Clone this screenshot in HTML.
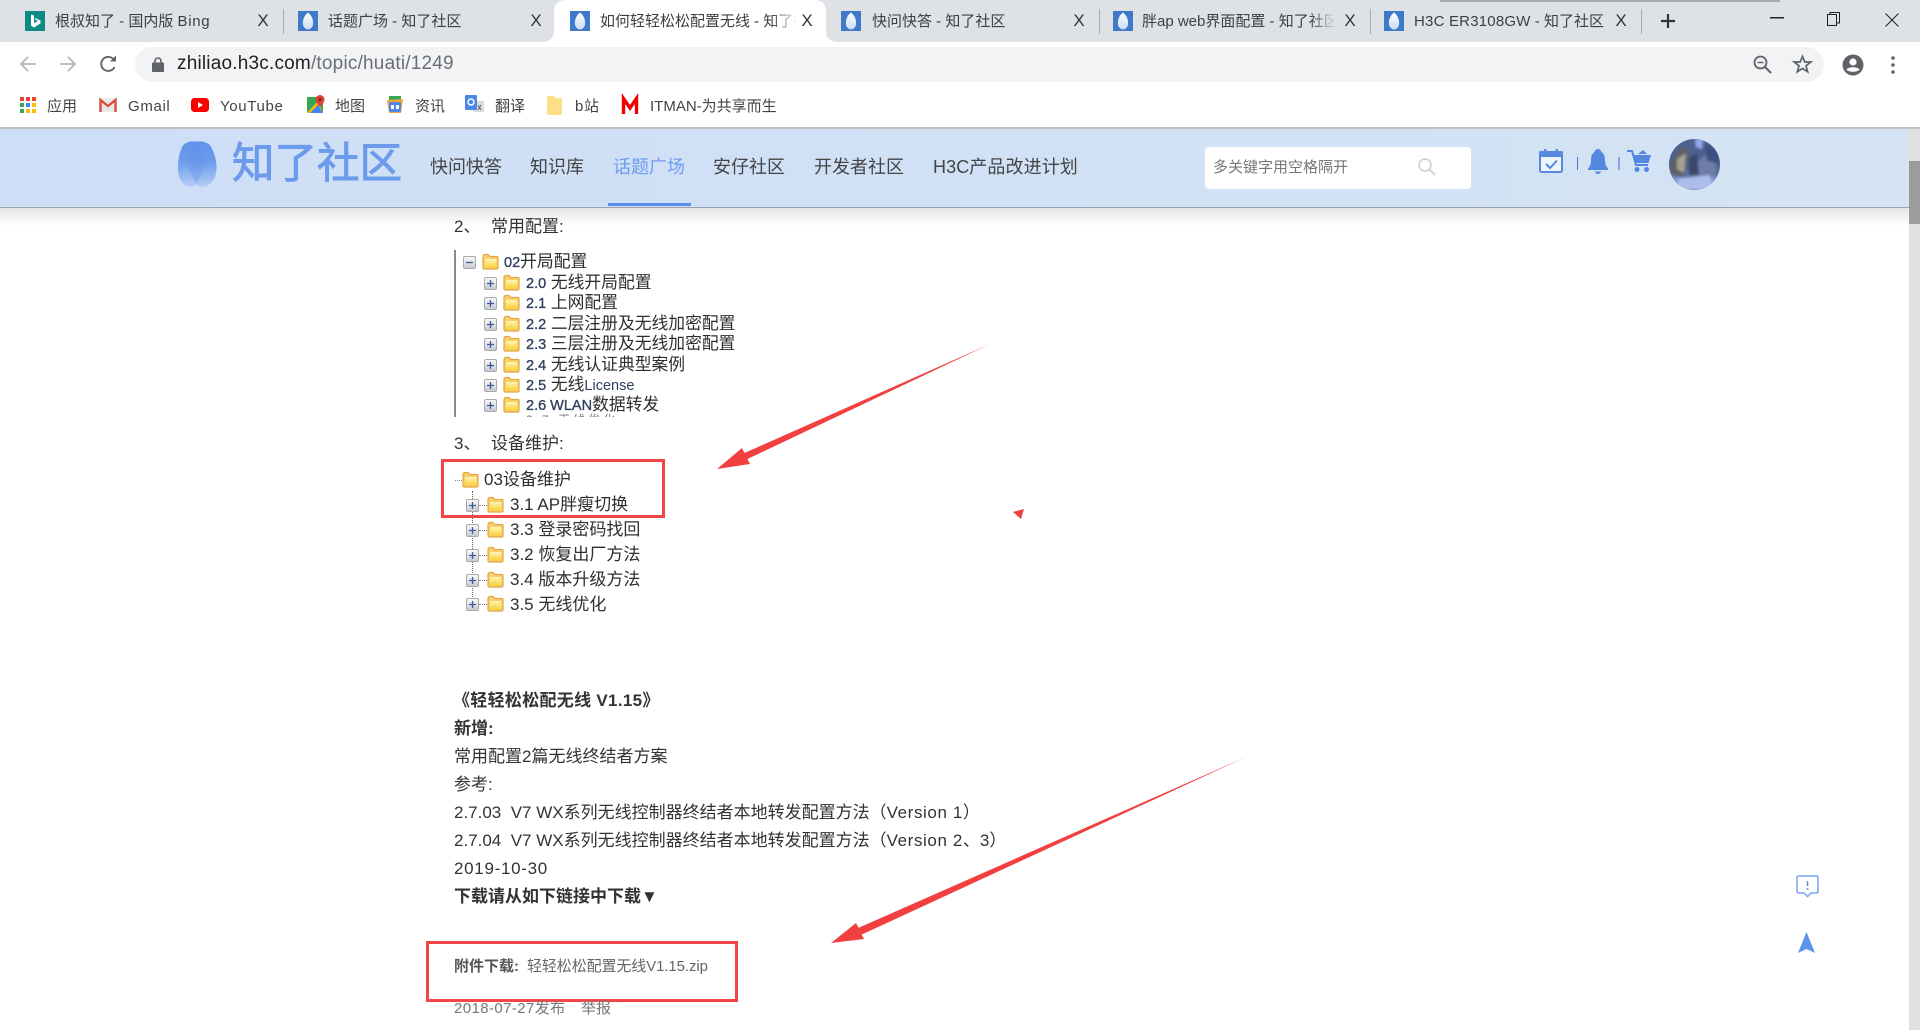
<!DOCTYPE html>
<html lang="zh">
<head>
<meta charset="utf-8">
<title>知了社区</title>
<style>
html,body{margin:0;padding:0;width:1920px;height:1030px;overflow:hidden;background:#fff}
body{position:relative;font-family:"Liberation Sans","Noto Sans CJK SC",sans-serif;color:#333}
.a{position:absolute}
.t{position:absolute;white-space:nowrap;line-height:24px;height:24px;margin-top:1px}
.tab{font-size:15px;color:#3c4043}
.x{position:absolute;font-size:17px;line-height:20px;color:#333;top:11px;width:14px;text-align:center;font-weight:400}
.sep{position:absolute;width:1px;top:9px;height:25px;background:#a9adb2}
.bm{font-size:15px;color:#444}
.bm i{font-style:normal;letter-spacing:.65px}
.nav{font-size:18px;color:#444}
.c{font-size:17px;color:#333}
.tree{font-size:16.8px;color:#2e2e2e;margin-top:0}
.tree b{font-weight:400;font-size:14.5px;color:#30405f;-webkit-text-stroke:.35px #30405f}
.tree2{font-size:17px;color:#2e2e2e}
svg{position:absolute;overflow:visible}
.fade{position:absolute;top:6px;height:30px;width:26px}
</style>
</head>
<body>
<svg width="0" height="0" style="position:absolute">
<defs>
<linearGradient id="fav" x1="0" y1="0" x2="0" y2="1"><stop offset="0" stop-color="#fff"/><stop offset="1" stop-color="#c9dcf4"/></linearGradient>
<linearGradient id="fl" x1="0" y1="0" x2="0" y2="1"><stop offset="0" stop-color="#fff6b4"/><stop offset="1" stop-color="#fbcf38"/></linearGradient>
<linearGradient id="ex" x1="0" y1="0" x2="0" y2="1"><stop offset="0" stop-color="#fbfbfc"/><stop offset="1" stop-color="#c4c8d0"/></linearGradient>
<linearGradient id="logoG" x1="0" y1="0" x2="0" y2="1"><stop offset="0" stop-color="#5f92ea"/><stop offset=".45" stop-color="#6d9cec"/><stop offset="1" stop-color="#6d9cec" stop-opacity=".25"/></linearGradient>
<symbol id="favi" viewBox="0 0 20 20"><rect width="20" height="20" fill="#3f79c9"/><path d="M10 1.500C5.500 5 4.500 10 5 13.500 5.500 17 8.500 18.500 10 18.500s4.500-1.500 5-5C15.500 10 14.500 5 10 1.500Z" fill="url(#fav)"/></symbol>
<symbol id="folder" viewBox="0 0 17 17"><path d="M1 4Q1 1.500 3 1.500H6L8 3.500H15Q16 3.500 16 5V14.500Q16 16 14.500 16H2.500Q1 16 1 14.500Z" fill="#f8cf6a" stroke="#e2a544" stroke-width="1.200"/><rect x="3" y="6" width="11.500" height="8.500" rx="1" fill="url(#fl)"/></symbol>
<symbol id="plus" viewBox="0 0 13 13"><rect x=".5" y=".5" width="12" height="12" rx="1.500" fill="url(#ex)" stroke="#aaa"/><path d="M6.500 3V10M3 6.500H10" stroke="#3a5a9a" stroke-width="1.300"/></symbol>
<symbol id="minus" viewBox="0 0 13 13"><rect x=".5" y=".5" width="12" height="12" rx="1.500" fill="url(#ex)" stroke="#aaa"/><path d="M3 6.500H10" stroke="#3a5a9a" stroke-width="1.300"/></symbol>
</defs>
</svg>

<!-- Tab strip -->
<div class="a" style="left:0;top:0;width:1920px;height:42px;background:#dee1e6"></div>
<div class="a" style="left:1440px;top:0;width:340px;height:2px;background:#a9adb3"></div>
<svg style="left:542px;top:0" width="296" height="42"><path d="M0 42Q12 42 12 30V12Q12 0 24 0H272Q284 0 284 12V30Q284 42 296 42Z" fill="#fff"/></svg>
<div class="sep" style="left:283px"></div><div class="sep" style="left:1099px"></div><div class="sep" style="left:1370px"></div><div class="sep" style="left:1641px"></div>

<svg style="left:25px;top:11px" width="20" height="20" viewBox="0 0 20 20"><rect width="20" height="20" fill="#0d8a82"/><path d="M6 3.500L9 4.500V12L13 10 10.500 8.800 10 7 15.500 9.500V12.500L9 16.500 6 14.800Z" fill="#fff"/></svg>
<div class="t tab" style="left:55px;top:9px">根叔知了 - 国内版 <span style="letter-spacing:.7px">Bing</span></div>
<div class="x" style="left:256px">X</div>

<svg style="left:298px;top:11px" width="20" height="20"><use href="#favi"/></svg>
<div class="t tab" style="left:328px;top:9px">话题广场 - 知了社区</div>
<div class="x" style="left:529px">X</div>

<svg style="left:570px;top:11px" width="20" height="20"><use href="#favi"/></svg>
<div class="t tab" style="left:600px;top:9px;width:196px;overflow:hidden">如何轻轻松松配置无线 - 知了社区</div>
<div class="fade" style="left:772px;background:linear-gradient(90deg,rgba(255,255,255,0),#fff)"></div>
<div class="x" style="left:800px">X</div>

<svg style="left:841px;top:11px" width="20" height="20"><use href="#favi"/></svg>
<div class="t tab" style="left:872px;top:9px">快问快答 - 知了社区</div>
<div class="x" style="left:1072px">X</div>

<svg style="left:1113px;top:11px" width="20" height="20"><use href="#favi"/></svg>
<div class="t tab" style="left:1142px;top:9px;width:192px;overflow:hidden">胖ap web界面配置 - 知了社区</div>
<div class="fade" style="left:1310px;background:linear-gradient(90deg,rgba(222,225,230,0),#dee1e6)"></div>
<div class="x" style="left:1343px">X</div>

<svg style="left:1384px;top:11px" width="20" height="20"><use href="#favi"/></svg>
<div class="t tab" style="left:1414px;top:9px"><span style="letter-spacing:.2px">H3C ER3108GW</span> - 知了社区</div>
<div class="x" style="left:1614px">X</div>

<svg style="left:1660px;top:13px" width="16" height="16"><path d="M8 1V15M1 8H15" stroke="#333" stroke-width="2.200"/></svg>
<!-- window controls -->
<svg style="left:1770px;top:17px" width="14" height="2"><rect width="14" height="1.500" fill="#222"/></svg>
<svg style="left:1827px;top:12px" width="14" height="14"><rect x=".5" y="2.500" width="9" height="11" fill="none" stroke="#222"/><path d="M3 2.500V.5H12.500V11H9.500" fill="none" stroke="#222"/></svg>
<svg style="left:1885px;top:13px" width="14" height="14"><path d="M.5.5L13.500 13.500M13.500.5L.5 13.500" stroke="#222" stroke-width="1"/></svg>

<!-- Toolbar -->
<div class="a" style="left:135px;top:47px;width:1689px;height:35px;border-radius:18px;background:#f1f3f4"></div>
<svg style="left:19px;top:55px" width="18" height="18" viewBox="0 0 18 18"><path d="M17 9H2M9 2L2 9L9 16" fill="none" stroke="#b4b7bb" stroke-width="1.800"/></svg>
<svg style="left:59px;top:55px" width="18" height="18" viewBox="0 0 18 18"><path d="M1 9H16M9 2L16 9L9 16" fill="none" stroke="#b4b7bb" stroke-width="1.800"/></svg>
<svg style="left:99px;top:55px" width="19" height="18" viewBox="0 0 19 18"><path d="M15.500 12A7 7 0 1 1 15 5" fill="none" stroke="#5f6368" stroke-width="1.900"/><path d="M11 6.500H17V.5Z" fill="#5f6368"/></svg>
<svg style="left:152px;top:57px" width="12" height="15" viewBox="0 0 12 15"><rect y="5.500" width="12" height="9.500" rx="1" fill="#5f6368"/><path d="M3 6V4A3 3 0 0 1 9 4V6" fill="none" stroke="#5f6368" stroke-width="1.600"/></svg>
<div class="t" style="left:177px;top:51px;font-size:19px;letter-spacing:.2px;color:#202124">zhiliao.h3c.com<span style="color:#6b6f74">/topic/huati/1249</span></div>
<svg style="left:1753px;top:55px" width="19" height="19" viewBox="0 0 19 19"><circle cx="7.500" cy="7.500" r="6" fill="none" stroke="#5f6368" stroke-width="1.800"/><path d="M12 12L18 18" stroke="#5f6368" stroke-width="2"/><path d="M4.500 7.500H10.500" stroke="#5f6368" stroke-width="1.500"/></svg>
<svg style="left:1793px;top:55px" width="19" height="18" viewBox="0 0 19 18"><path d="M9.500 1.500L11.800 7H17.800L13 10.800 14.700 16.800 9.500 13.400 4.300 16.800 6 10.800 1.200 7H7.200Z" fill="none" stroke="#5f6368" stroke-width="1.700"/></svg>
<svg style="left:1842px;top:54px" width="22" height="22" viewBox="0 0 22 22"><circle cx="11" cy="11" r="10.500" fill="#5f6368"/><circle cx="11" cy="8" r="3.600" fill="#fff"/><path d="M4.500 15.500C6.500 12.500 15.500 12.500 17.500 15.500 15.500 18.500 6.500 18.500 4.500 15.500Z" fill="#fff"/></svg>
<svg style="left:1891px;top:56px" width="4" height="18"><circle cx="2" cy="2" r="1.800" fill="#5f6368"/><circle cx="2" cy="9" r="1.800" fill="#5f6368"/><circle cx="2" cy="16" r="1.800" fill="#5f6368"/></svg>

<!-- Bookmarks -->
<svg style="left:20px;top:97px" width="16" height="16" viewBox="0 0 16 16">
<rect x="0" y="0" width="4" height="4" fill="#ea4335"/><rect x="6" y="0" width="4" height="4" fill="#ea4335"/><rect x="12" y="0" width="4" height="4" fill="#ea4335"/>
<rect x="0" y="6" width="4" height="4" fill="#34a853"/><rect x="6" y="6" width="4" height="4" fill="#4285f4"/><rect x="12" y="6" width="4" height="4" fill="#fbbc05"/>
<rect x="0" y="12" width="4" height="4" fill="#34a853"/><rect x="6" y="12" width="4" height="4" fill="#fbbc05"/><rect x="12" y="12" width="4" height="4" fill="#fbbc05"/></svg>
<div class="t bm" style="left:47px;top:94px">应用</div>
<svg style="left:99px;top:98px" width="18" height="14" viewBox="0 0 18 14"><rect width="18" height="14" rx="1" fill="#e8e8e8"/><path d="M1.500 14V2L9 8 16.500 2V14" fill="none" stroke="#d9503f" stroke-width="2.400"/></svg>
<div class="t bm" style="left:128px;top:94px"><i>Gmail</i></div>
<svg style="left:191px;top:98px" width="18" height="14" viewBox="0 0 18 14"><rect width="18" height="14" rx="3.500" fill="#f00"/><path d="M7 4V10L12 7Z" fill="#fff"/></svg>
<div class="t bm" style="left:220px;top:94px"><i>YouTube</i></div>
<svg style="left:307px;top:95px" width="18" height="19" viewBox="0 0 18 19"><rect y="2" width="16" height="16" fill="#34a853"/><path d="M0 18L11 6 16 18Z" fill="#fbbc05"/><path d="M3 18L11 10 16 18Z" fill="#4285f4"/><path d="M13 0A4.500 4.500 0 0 1 17.500 4.500C17.500 7.500 13 12 13 12S8.500 7.500 8.500 4.500A4.500 4.500 0 0 1 13 0Z" fill="#db4437"/><circle cx="13" cy="4.500" r="1.500" fill="#8c1f14"/></svg>
<div class="t bm" style="left:335px;top:94px">地图</div>
<svg style="left:386px;top:95px" width="18" height="19" viewBox="0 0 18 19"><path d="M3 1H15V6H3Z" fill="#34a853"/><path d="M1 5L17 4 15 18H3Z" fill="#f7a23c"/><rect x="3" y="7" width="12" height="10" rx="1" fill="#4f88e8"/><rect x="5" y="10" width="3" height="4" fill="#fff"/><rect x="10" y="10" width="3" height="4" fill="#fff"/></svg>
<div class="t bm" style="left:415px;top:94px">资讯</div>
<svg style="left:465px;top:95px" width="20" height="19" viewBox="0 0 20 19"><rect x="8" y="6" width="11" height="11" fill="#dcdcdc"/><rect x="0" y="0" width="12" height="15" rx="1" fill="#4a86e8"/><circle cx="6" cy="7" r="3" fill="none" stroke="#fff" stroke-width="1.400"/><path d="M13 10L16 15M16 10L13 15" stroke="#666"/></svg>
<div class="t bm" style="left:495px;top:94px">翻译</div>
<svg style="left:547px;top:96px" width="15" height="19" viewBox="0 0 15 19"><path d="M0 1Q0 0 1 0H7L9 2H14Q15 2 15 3V17Q15 19 13 19H2Q0 19 0 17Z" fill="#fddf86"/></svg>
<div class="t bm" style="left:575px;top:94px"><i>b</i>站</div>
<svg style="left:622px;top:96px" width="16" height="18" viewBox="0 0 16 18"><path d="M1.500 18V2.500L8 12 14.500 2.500V18" fill="none" stroke="#f00000" stroke-width="3.400"/></svg>
<div class="t bm" style="left:650px;top:94px">ITMAN-为共享而生</div>
<div class="a" style="left:0;top:127px;width:1920px;height:2px;background:#bfc1c4"></div>

<!-- Header -->
<div class="a" style="left:0;top:129px;width:1909px;height:78px;background:linear-gradient(90deg,#cddef7,#d4e4f4)"></div>
<div class="a" style="left:0;top:207px;width:1909px;height:1.500px;background:#9ba4ae"></div>
<div class="a" style="left:0;top:208px;width:1909px;height:18px;background:linear-gradient(#e4e5e6,#fff)"></div>

<svg style="left:176px;top:140px" width="42" height="48" viewBox="0 0 42 48">
<path d="M8 4L14 1.500H27L33 4C38 10 40.500 20 40.500 28 40.500 40 33 47 26 47 22 47 20.500 44 20.500 44S19 47 15 47C8 47 2 40 2 28 2 20 3.500 10 8 4Z" fill="url(#logoG)"/>
<path d="M20.500 44C14 34 10 22 12 8L29 8C31 22 27 34 20.500 44Z" fill="#5f92ea" opacity=".35"/>
</svg>
<div class="t" style="left:232px;top:139px;height:50px;line-height:50px;font-size:42.500px;color:#6b9bea;-webkit-text-stroke:.9px #6b9bea">知了社区</div>

<div class="t nav" style="left:430px;top:154px">快问快答</div>
<div class="t nav" style="left:530px;top:154px">知识库</div>
<div class="t nav" style="left:613px;top:154px;color:#6d9cec">话题广场</div>
<div class="a" style="left:608px;top:203px;width:83px;height:3px;background:#5b8de8"></div>
<div class="t nav" style="left:713px;top:154px">安仔社区</div>
<div class="t nav" style="left:814px;top:154px">开发者社区</div>
<div class="t nav" style="left:933px;top:154px;letter-spacing:.1px">H3C产品改进计划</div>

<div class="a" style="left:1205px;top:147px;width:266px;height:42px;border-radius:4px;background:#fff"></div>
<div class="t" style="left:1213px;top:155px;font-size:15px;color:#777">多关键字用空格隔开</div>
<svg style="left:1418px;top:158px" width="18" height="18" viewBox="0 0 18 18"><circle cx="7" cy="7" r="6" fill="none" stroke="#cfcfcf" stroke-width="1.500"/><path d="M11.500 11.500L17 17" stroke="#cfcfcf" stroke-width="1.800"/></svg>

<svg style="left:1539px;top:149px" width="24" height="24" viewBox="0 0 24 24"><rect x="1" y="3" width="22" height="20" rx="1.500" fill="#eef4fb" stroke="#5789e0" stroke-width="2"/><rect x="0" y="2" width="24" height="6" rx="1.500" fill="#5789e0"/><rect x="5" y="0" width="2.500" height="5" fill="#5789e0"/><rect x="16.500" y="0" width="2.500" height="5" fill="#5789e0"/><path d="M7 15L11 19 18 11.500" fill="none" stroke="#5789e0" stroke-width="2"/></svg>
<div class="a" style="left:1577px;top:157px;width:1px;height:13px;background:#5a6fe8"></div>
<svg style="left:1588px;top:149px" width="20" height="25" viewBox="0 0 20 25"><path d="M10 0C12 0 13 1.500 13.500 3 16.500 5 17 8 17 12 17 15 18 17 20 19.500V21H0V19.500C2 17 3 15 3 12 3 8 3.500 5 6.500 3 7 1.500 8 0 10 0Z" fill="#5487df"/><path d="M7 22.500H13A3 2.500 0 0 1 7 22.500Z" fill="#5487df"/></svg>
<div class="a" style="left:1618px;top:157px;width:2px;height:13px;background:#8f9ff0"></div>
<svg style="left:1627px;top:149px" width="24" height="24" viewBox="0 0 24 24"><path d="M0 2H5L9 16H21" fill="none" stroke="#5487df" stroke-width="2"/><path d="M6 6H24L21.500 14H8.500Z" fill="#5487df"/><path d="M11 5L16 1 20 5Z" fill="#5487df"/><circle cx="10" cy="20.500" r="2.500" fill="#5487df"/><circle cx="19.500" cy="20.500" r="2.500" fill="#5487df"/></svg>

<svg style="left:1669px;top:139px" width="51" height="51" viewBox="0 0 51 51">
<defs><clipPath id="av"><circle cx="25.500" cy="25.500" r="25.500"/></clipPath>
<filter id="bl"><feGaussianBlur stdDeviation="1.300"/></filter></defs>
<g clip-path="url(#av)"><rect width="51" height="51" fill="#5a6f9e"/><g filter="url(#bl)">
<rect x="0" y="0" width="51" height="30" fill="#4d6290"/>
<path d="M26 0L34 0 33 10 27 8Z" fill="#93a9ee"/>
<path d="M2 24L12 8 20 12 14 40 2 34Z" fill="#5f5f63"/>
<path d="M8 20L17 14 15 34 8 30Z" fill="#a8a193"/>
<path d="M24 26L40 14 47 26 47 38 24 38Z" fill="#6c7ea6"/>
<path d="M36 6L50 10 50 24 38 22Z" fill="#3d5080"/>
<path d="M0 38H51V51H0Z" fill="#8498d4"/>
<path d="M10 40L40 36 46 51H6Z" fill="#aebeea"/>
<path d="M20 18L28 14 30 36 20 36Z" fill="#3a4768"/>
</g></g></svg>

<!-- Scrollbar -->
<div class="a" style="left:1909px;top:129px;width:11px;height:901px;background:#e0e0e0"></div>
<div class="a" style="left:1909px;top:161px;width:11px;height:63px;background:#9c9c9c"></div>

<!-- Content -->
<div class="t c" style="left:454px;top:214px">2、</div>
<div class="t c" style="left:491px;top:214px">常用配置:</div>

<div class="a" style="left:454px;top:250px;width:1.500px;height:167px;background:#8a8a8a"></div>
<div class="a" style="left:456px;top:250px;width:300px;height:167px;overflow:hidden">
<svg style="left:7px;top:6px" width="13" height="13"><use href="#minus"/></svg>
<svg style="left:26px;top:3px" width="17" height="17"><use href="#folder"/></svg>
<div class="t tree" style="left:48px;top:0"><b>02</b>开局配置</div>

<svg style="left:28px;top:27px" width="13" height="13"><use href="#plus"/></svg>
<svg style="left:47px;top:24px" width="17" height="17"><use href="#folder"/></svg>
<div class="t tree" style="left:70px;top:21px"><b>2.0</b> 无线开局配置</div>

<svg style="left:28px;top:47px" width="13" height="13"><use href="#plus"/></svg>
<svg style="left:47px;top:44px" width="17" height="17"><use href="#folder"/></svg>
<div class="t tree" style="left:70px;top:41px"><b>2.1</b> 上网配置</div>

<svg style="left:28px;top:68px" width="13" height="13"><use href="#plus"/></svg>
<svg style="left:47px;top:65px" width="17" height="17"><use href="#folder"/></svg>
<div class="t tree" style="left:70px;top:62px"><b>2.2</b> 二层注册及无线加密配置</div>

<svg style="left:28px;top:88px" width="13" height="13"><use href="#plus"/></svg>
<svg style="left:47px;top:85px" width="17" height="17"><use href="#folder"/></svg>
<div class="t tree" style="left:70px;top:82px"><b>2.3</b> 三层注册及无线加密配置</div>

<svg style="left:28px;top:109px" width="13" height="13"><use href="#plus"/></svg>
<svg style="left:47px;top:106px" width="17" height="17"><use href="#folder"/></svg>
<div class="t tree" style="left:70px;top:103px"><b>2.4</b> 无线认证典型案例</div>

<svg style="left:28px;top:129px" width="13" height="13"><use href="#plus"/></svg>
<svg style="left:47px;top:126px" width="17" height="17"><use href="#folder"/></svg>
<div class="t tree" style="left:70px;top:123px"><b>2.5</b> 无线<span style="font-size:14.500px;color:#30405f">License</span></div>

<svg style="left:28px;top:149px" width="13" height="13"><use href="#plus"/></svg>
<svg style="left:47px;top:146px" width="17" height="17"><use href="#folder"/></svg>
<div class="t tree" style="left:70px;top:143px"><b>2.6 WLAN</b>数据转发</div>
<div class="t tree" style="left:70px;top:158px;font-size:12px;color:#777;letter-spacing:3px">2.7 无线优化</div>
</div>

<div class="t c" style="left:454px;top:431px">3、</div>
<div class="t c" style="left:491px;top:431px">设备维护:</div>

<!-- tree 2 -->
<div class="a" style="left:455px;top:480px;width:7px;border-top:1px dotted #888"></div>
<div class="a" style="left:472px;top:491px;height:114px;border-left:1px dotted #666"></div>
<svg style="left:462px;top:471px" width="17" height="17"><use href="#folder"/></svg>
<div class="t tree2" style="left:484px;top:468px;margin-top:0">03设备维护</div>

<div class="a" style="left:479px;top:505px;width:8px;border-top:1px dotted #888"></div>
<svg style="left:466px;top:499px" width="13" height="13"><use href="#plus"/></svg>
<svg style="left:487px;top:496px" width="17" height="17"><use href="#folder"/></svg>
<div class="t tree2" style="left:510px;top:493px;margin-top:0">3.1 AP胖瘦切换</div>

<div class="a" style="left:479px;top:530px;width:8px;border-top:1px dotted #888"></div>
<svg style="left:466px;top:524px" width="13" height="13"><use href="#plus"/></svg>
<svg style="left:487px;top:521px" width="17" height="17"><use href="#folder"/></svg>
<div class="t tree2" style="left:510px;top:517px">3.3 登录密码找回</div>

<div class="a" style="left:479px;top:555px;width:8px;border-top:1px dotted #888"></div>
<svg style="left:466px;top:549px" width="13" height="13"><use href="#plus"/></svg>
<svg style="left:487px;top:546px" width="17" height="17"><use href="#folder"/></svg>
<div class="t tree2" style="left:510px;top:542px">3.2 恢复出厂方法</div>

<div class="a" style="left:479px;top:580px;width:8px;border-top:1px dotted #888"></div>
<svg style="left:466px;top:574px" width="13" height="13"><use href="#plus"/></svg>
<svg style="left:487px;top:571px" width="17" height="17"><use href="#folder"/></svg>
<div class="t tree2" style="left:510px;top:567px">3.4 版本升级方法</div>

<div class="a" style="left:479px;top:604px;width:8px;border-top:1px dotted #888"></div>
<svg style="left:466px;top:598px" width="13" height="13"><use href="#plus"/></svg>
<svg style="left:487px;top:595px" width="17" height="17"><use href="#folder"/></svg>
<div class="t tree2" style="left:510px;top:592px">3.5 无线优化</div>

<div class="a" style="left:441px;top:459px;width:218px;height:53px;border:3px solid #f44546"></div>

<!-- arrows -->
<svg style="left:0;top:0" width="1920" height="1030">
<polygon points="990,344 747.500,459 750,464 717,469 742,448 744.500,453" fill="#f23f3f"/>
<polygon points="1024,509 1013,512 1021,519" fill="#f23f3f"/>
<polygon points="1246,757 861.600,934.600 864,939 831,943 856,923 858.600,927.800" fill="#f23f3f"/>
</svg>

<!-- text -->
<div class="t c" style="left:453px;top:688px;font-weight:700;letter-spacing:.3px">《轻轻松松配无线 V1.15》</div>
<div class="t c" style="left:454px;top:716px;font-weight:700">新增:</div>
<div class="t c" style="left:454px;top:744px">常用配置2篇无线终结者方案</div>
<div class="t c" style="left:454px;top:772px">参考:</div>
<div class="t c" style="left:454px;top:800px">2.7.03&nbsp; V7 WX系列无线控制器终结者本地转发配置方法（<span style="letter-spacing:.6px">Version 1</span>）</div>
<div class="t c" style="left:454px;top:828px">2.7.04&nbsp; V7 WX系列无线控制器终结者本地转发配置方法（<span style="letter-spacing:.6px">Version 2</span>、3）</div>
<div class="t c" style="left:454px;top:856px;letter-spacing:.7px">2019-10-30</div>
<div class="t c" style="left:454px;top:884px;font-weight:700">下载请从如下链接中下载▼</div>

<div class="t" style="left:454px;top:954px;font-size:15px;font-weight:700;color:#555">附件下载:</div>
<div class="t" style="left:527px;top:954px;font-size:15px;color:#666;letter-spacing:-.1px">轻轻松松配置无线V1.15.zip</div>
<div class="a" style="left:426px;top:941px;width:306px;height:55px;border:3px solid #f44546"></div>

<div class="t" style="left:454px;top:996px;font-size:15px;color:#777;letter-spacing:.4px">2018-07-27发布</div>
<div class="t" style="left:581px;top:996px;font-size:15px;color:#777">举报</div>

<!-- side icons -->
<svg style="left:1796px;top:875px" width="23" height="23" viewBox="0 0 23 23"><path d="M3 1H20Q22 1 22 3V16Q22 18 20 18H15L11.500 21.500 8 18H3Q1 18 1 16V3Q1 1 3 1Z" fill="none" stroke="#8ab0f2" stroke-width="1.800"/><path d="M11.500 6V11" stroke="#6c8fd0" stroke-width="1.600"/><circle cx="11.500" cy="14" r="1" fill="#6c8fd0"/></svg>
<svg style="left:1798px;top:932px" width="17" height="21" viewBox="0 0 17 21"><path d="M8.500 0L17 21 8.500 17 0 21Z" fill="#5d95ee"/></svg>
</body>
</html>
